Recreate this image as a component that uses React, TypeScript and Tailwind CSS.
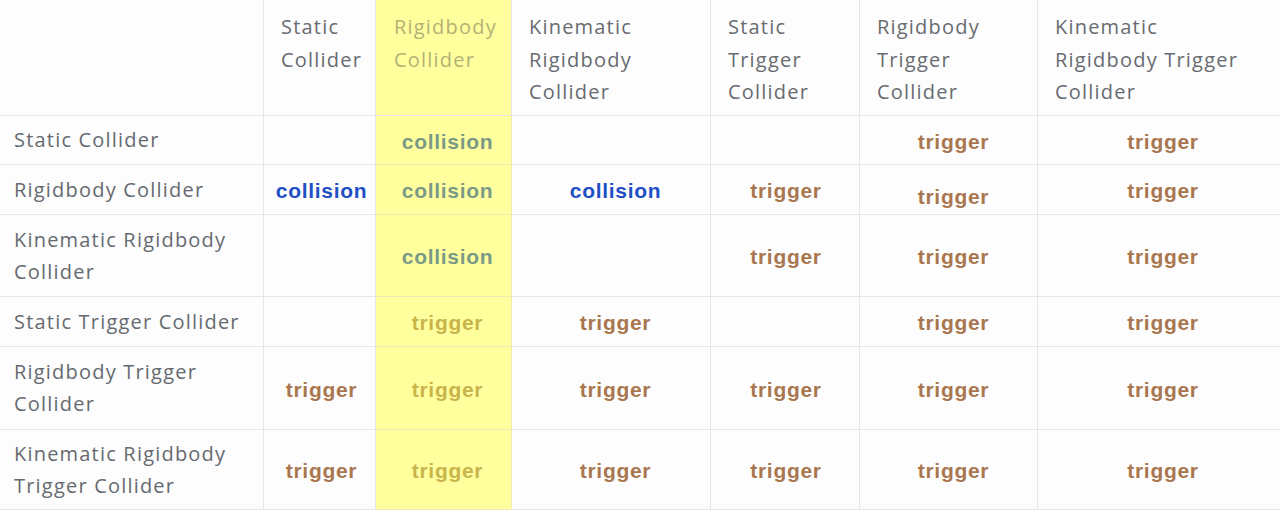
import React from "react";

type Cell = "" | "c" | "t";

const headers: string[][] = [
  ["Static", "Collider"],
  ["Rigidbody", "Collider"],
  ["Kinematic", "Rigidbody", "Collider"],
  ["Static", "Trigger", "Collider"],
  ["Rigidbody", "Trigger", "Collider"],
  ["Kinematic", "Rigidbody Trigger", "Collider"],
];

const rows: { label: string[]; cells: Cell[]; h: string }[] = [
  { label: ["Static Collider"], cells: ["", "c", "", "", "t", "t"], h: "h-[49px]" },
  { label: ["Rigidbody Collider"], cells: ["c", "c", "c", "t", "t", "t"], h: "h-[50px]" },
  { label: ["Kinematic Rigidbody", "Collider"], cells: ["", "c", "", "t", "t", "t"], h: "h-[82px]" },
  { label: ["Static Trigger Collider"], cells: ["", "t", "t", "", "t", "t"], h: "h-[50px]" },
  { label: ["Rigidbody Trigger", "Collider"], cells: ["t", "t", "t", "t", "t", "t"], h: "h-[83px]" },
  { label: ["Kinematic Rigidbody", "Trigger Collider"], cells: ["t", "t", "t", "t", "t", "t"], h: "h-[80px]" },
];

const widths = ["w-[112px]", "w-[136px]", "w-[199px]", "w-[149px]", "w-[178px]", "w-[242px]"];
const pads = ["pl-[4px]", "pl-[8px]", "pl-[9px]", "pl-[2px]", "pl-[10px]", "pl-[8px]"];

const sans = "font-['Open_Sans','Liberation_Sans',sans-serif]";
const bold = "font-['Liberation_Sans',Arial,sans-serif] font-bold text-[21px] tracking-[0.7px]";

function Value({ v, yellow, low }: { v: Cell; yellow: boolean; low?: boolean }) {
  if (!v) return null;
  const color =
    v === "c"
      ? yellow
        ? "text-[#7a9a86]"
        : "text-[#1f4fc4]"
      : yellow
        ? "text-[#c8b44a]"
        : "text-[#a9774f]";
  return (
    <span className={`${bold} ${color} ${low ? "mt-[12px]" : ""}`}>
      {v === "c" ? "collision" : "trigger"}
    </span>
  );
}

export default function App() {
  const line = "border-[#e6e6e6]";
  return (
    <div className="w-[1280px] h-[510px] bg-[#fdfdfd] overflow-hidden">
      <div className="flex">
        <div className={`w-[264px] h-[116px] border-r border-b ${line}`} />
        {headers.map((h, i) => (
          <div
            key={i}
            className={`${widths[i]} h-[116px] border-b ${line} ${i < 5 ? "border-r" : ""} ${
              i === 1 ? "bg-[#ffff9e] text-[#b5b175] pl-[18px]" : "text-[#686b70] pl-[17px]"
            } pt-[11px] ${sans} text-[20px] leading-[32.5px] tracking-[1.2px]`}
          >
            {h.map((l, j) => (
              <div key={j} className="whitespace-nowrap">
                {l}
              </div>
            ))}
          </div>
        ))}
      </div>
      {rows.map((r, ri) => (
        <div key={ri} className="flex">
          <div
            className={`w-[264px] ${r.h} border-r border-b ${line} pl-[14px] flex flex-col justify-center ${sans} text-[20px] leading-[32px] tracking-[1.2px] text-[#666a70]`}
          >
            {r.label.map((l, j) => (
              <div key={j} className="whitespace-nowrap">
                {l}
              </div>
            ))}
          </div>
          {r.cells.map((v, ci) => (
            <div
              key={ci}
              className={`${widths[ci]} ${r.h} border-b ${ci < 5 ? "border-r" : ""} ${
                ci === 1 ? "bg-[#ffff9e] border-[#ecebb0]" : line
              } flex items-center justify-center ${pads[ci]} pt-[3px]`}
            >
              <Value v={v} yellow={ci === 1} low={ri === 1 && ci === 4} />
            </div>
          ))}
        </div>
      ))}
    </div>
  );
}
